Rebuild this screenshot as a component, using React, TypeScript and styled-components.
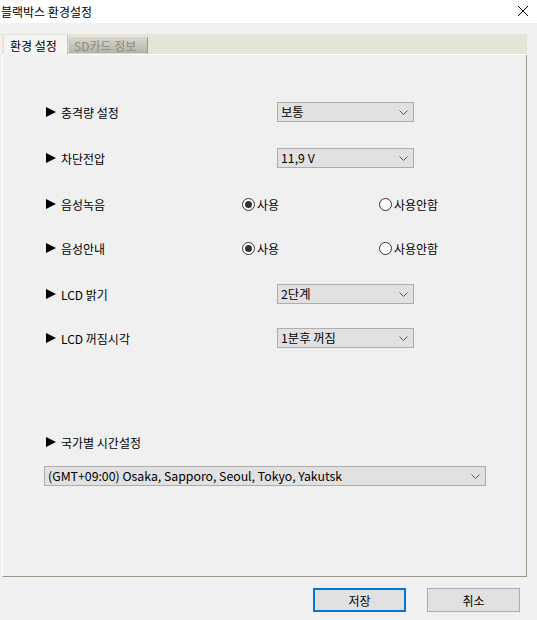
import React, { useState } from "react";
import styled, { createGlobalStyle } from "styled-components";

const GlobalStyle = createGlobalStyle`
  html, body {
    margin: 0;
    padding: 0;
    background: #f0f0f0;
  }
  body {
    font-family: "Noto Sans CJK KR", "Liberation Sans", sans-serif;
    font-size: 12px;
    color: #000;
  }
`;

// 창 전체
const Window = styled.div`
  width: 537px;
  height: 620px;
  display: flex;
  flex-direction: column;
  background: #f0f0f0;
  overflow: hidden;
`;

const TitleBar = styled.div`
  height: 23px;
  background: #fff;
  display: flex;
  align-items: center;
  justify-content: space-between;
  padding: 0 8px 0 1px;
  box-sizing: border-box;
`;

const Title = styled.span`
  font-size: 12px;
  line-height: 23px;
  margin-top: -1px;
`;

const CloseBtn = styled.span`
  width: 12px;
  height: 12px;
  display: inline-flex;
  margin-top: -2px;
`;

const Body = styled.div`
  flex: 1;
  display: flex;
  flex-direction: column;
  padding: 11px 10px 0 2px;
`;

const TabStrip = styled.div`
  height: 20px;
  background: #e5e5d7;
  display: flex;
  align-items: flex-end;
  padding-left: 2px;
  border-bottom: 1px solid #fff;
`;

const Tab = styled.div<{ $active?: boolean }>`
  width: ${p => (p.$active ? "64px" : "80px")};
  height: ${p => (p.$active ? "20px" : "17px")};
  box-sizing: border-box;
  padding: ${p => (p.$active ? "0 0 0 6px" : "0 0 0 5px")};
  display: flex;
  align-items: center;
  font-size: 12px;
  color: ${p => (p.$active ? "#000" : "#8c8c84")};
  background: ${p =>
    p.$active ? "#f4f4f2" : "linear-gradient(#d6d6cc, #b4b4a6)"};
  border: ${p => (p.$active ? "none" : "1px solid #d8d8ce")};
  border-right: ${p => (p.$active ? "1px solid #c8c8bc" : "1px solid #9c9c8e")};
  margin-bottom: ${p => (p.$active ? "-1px" : "0")};
`;

const Panel = styled.div`
  height: 522px;
  box-sizing: border-box;
  background: #f0f0f0;
  border-left: 1px solid #fff;
  border-right: 1px solid #9a9a8c;
  border-bottom: 1px solid #9a9a8c;
  padding: 47px 0 0 42px;
  display: flex;
  flex-direction: column;
`;

const Row = styled.div<{ $space?: number }>`
  height: 20px;
  display: flex;
  align-items: center;
  margin-top: ${p => p.$space ?? 0}px;
`;

const Label = styled.div`
  width: 197px;
  display: flex;
  align-items: center;
  gap: 5px;
  font-size: 12px;
`;

const Arrow = styled.span`
  width: 0;
  height: 0;
  border-top: 5px solid transparent;
  border-bottom: 5px solid transparent;
  border-left: 10px solid #000;
  margin-left: 1px;
`;

const Select = styled.div<{ $width: number; $indent?: number }>`
  width: ${p => p.$width}px;
  height: 20px;
  box-sizing: border-box;
  margin-left: ${p => p.$indent ?? 0}px;
  border: 1px solid #adadad;
  background: #e1e1e1;
  display: flex;
  align-items: center;
  justify-content: space-between;
  padding: 0 4px 0 3px;
  font-size: 12.3px;
`;

const Chevron = styled.svg`
  width: 9px;
  height: 5px;
  margin-right: 1px;
`;

const RadioGroup = styled.div`
  display: flex;
  align-items: center;
  gap: 2px;
  width: 137px;
  cursor: pointer;
`;

const RadioCircle = styled.span<{ $checked: boolean }>`
  width: 13px;
  height: 13px;
  box-sizing: border-box;
  border-radius: 50%;
  border: 1px solid #333;
  background: #fff;
  display: inline-flex;
  align-items: center;
  justify-content: center;
  &::after {
    content: "";
    width: 7px;
    height: 7px;
    border-radius: 50%;
    background: ${p => (p.$checked ? "#333" : "transparent")};
  }
`;

const Footer = styled.div`
  display: flex;
  justify-content: flex-end;
  gap: 21px;
  padding: 11px 7px 0 0;
`;

const Button = styled.button<{ $default?: boolean }>`
  width: 93px;
  height: 24px;
  box-sizing: border-box;
  font-family: inherit;
  font-size: 12px;
  background: #e1e1e1;
  border: ${p => (p.$default ? "2px solid #0078d7" : "1px solid #adadad")};
  padding: 0;
  cursor: pointer;
`;

const Dropdown: React.FC<{ value: string; width: number; indent?: number }> = ({ value, width, indent }) => (
  <Select $width={width} $indent={indent}>
    <span>{value}</span>
    <Chevron viewBox="0 0 9 5">
      <path d="M0.5 0.5 L4.5 4.5 L8.5 0.5" stroke="#555" fill="none" strokeWidth="1" />
    </Chevron>
  </Select>
);

const RadioPair: React.FC<{ value: boolean; onChange: (v: boolean) => void }> = ({ value, onChange }) => (
  <>
    <RadioGroup onClick={() => onChange(true)}>
      <RadioCircle $checked={value} />
      <span>사용</span>
    </RadioGroup>
    <RadioGroup onClick={() => onChange(false)}>
      <RadioCircle $checked={!value} />
      <span>사용안함</span>
    </RadioGroup>
  </>
);

const App: React.FC = () => {
  const [record, setRecord] = useState(true);
  const [guide, setGuide] = useState(true);

  return (
    <Window>
      <GlobalStyle />
      <TitleBar>
        <Title>블랙박스 환경설정</Title>
        <CloseBtn>
          <svg width="12" height="12" viewBox="0 0 12 12">
            <path d="M1 1 L11 11 M11 1 L1 11" stroke="#000" strokeWidth="1" />
          </svg>
        </CloseBtn>
      </TitleBar>
      <Body>
        <TabStrip>
          <Tab $active>환경 설정</Tab>
          <Tab>SD카드 정보</Tab>
        </TabStrip>
        <Panel>
          <Row>
            <Label><Arrow />충격량 설정</Label>
            <Dropdown value="보통" width={137} indent={35} />
          </Row>
          <Row $space={26}>
            <Label><Arrow />차단전압</Label>
            <Dropdown value="11,9 V" width={137} indent={35} />
          </Row>
          <Row $space={26}>
            <Label><Arrow />음성녹음</Label>
            <RadioPair value={record} onChange={setRecord} />
          </Row>
          <Row $space={24}>
            <Label><Arrow />음성안내</Label>
            <RadioPair value={guide} onChange={setGuide} />
          </Row>
          <Row $space={26}>
            <Label><Arrow />LCD 밝기</Label>
            <Dropdown value="2단계" width={137} indent={35} />
          </Row>
          <Row $space={24}>
            <Label><Arrow />LCD 꺼짐시각</Label>
            <Dropdown value="1분후 꺼짐" width={137} indent={35} />
          </Row>
          <Row $space={84}>
            <Label><Arrow />국가별 시간설정</Label>
          </Row>
          <Row $space={14}>
            <Dropdown value="(GMT+09:00) Osaka, Sapporo, Seoul, Tokyo, Yakutsk" width={442} indent={-1} />
          </Row>
        </Panel>
        <Footer>
          <Button $default>저장</Button>
          <Button>취소</Button>
        </Footer>
      </Body>
    </Window>
  );
};

export default App;
